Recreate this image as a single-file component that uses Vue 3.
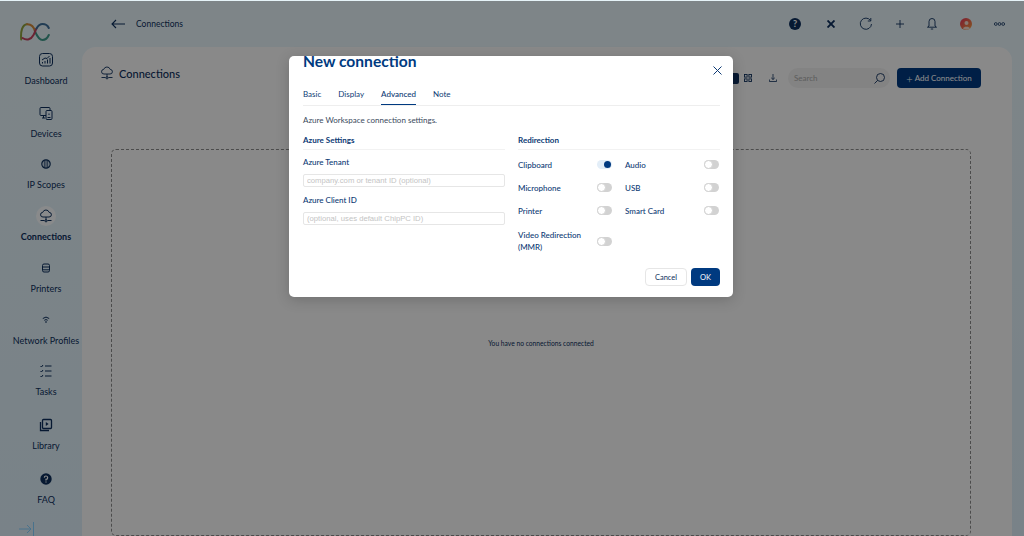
<template>
  <div class="app">
    <aside class="sidebar">
      <div class="logo">
        <svg width="30" height="19" viewBox="0 0 30 19" fill="none" stroke-width="2" stroke-linecap="round">
          <path d="M1.200 16.500C.5 9 2 1.500 7 1.200" stroke="#8fa03c" />
          <path d="M7 1.200C11 1 14 4 15 8.500" stroke="#d0883a" />
          <path d="M15 8.500C17 13 19 17 22.500 17C25 17 27.500 15 28.800 12" stroke="#3f9a8a" />
          <path d="M2.500 15C7 18 11 16.500 13.500 12C15 9.500 15.500 7 16.500 5.500" stroke="#c2405e" />
          <path d="M16.500 5.500C18.500 2 20.500 1 22.500 1C25 1 27.500 2 28.800 5" stroke="#3f6f9a" />
        </svg>
      </div>
      <nav class="nav">
        <div
          v-for="item in navItems"
          :key="item.label"
          class="nav-item"
          :class="{ active: item.active }"
          :style="{ height: item.h + 'px' }"
        >
          <div class="nav-icon">
            <svg width="18" height="18" viewBox="0 0 18 18" fill="none" stroke="#0d2f5c" stroke-width="1" v-html="item.icon"></svg>
          </div>
          <span>{{ item.label }}</span>
        </div>
      </nav>
      <svg class="collapse" width="16" height="14" viewBox="0 0 16 14" fill="none" stroke="#86d0ff" stroke-width="1">
        <path d="M0 7h12M8 3l4 4-4 4M14.500 0v14" />
      </svg>
    </aside>

    <div class="main">
      <header class="topbar">
        <div class="crumb">
          <svg width="14" height="10" viewBox="0 0 14 10" fill="none" stroke="#0d2f5c" stroke-width="1.100">
            <path d="M14 5H1M5 1L1 5l4 4" />
          </svg>
          <span>Connections</span>
        </div>
        <div class="top-actions">
          <span class="help">?</span>
          <svg class="a-x" width="8" height="8" viewBox="0 0 8 8" fill="none" stroke="#0d2f5c" stroke-width="1.900">
            <path d="M.5.5l7 7M7.500.5l-7 7" />
          </svg>
          <svg class="a-refresh" width="13" height="13" viewBox="0 0 13 13" fill="none" stroke="#0d2f5c" stroke-width=".9">
            <path d="M11.500 3.500A5.600 5.600 0 1 0 12.500 7" />
            <path d="M8.800 4h3V1" />
          </svg>
          <svg class="a-plus" width="8" height="8" viewBox="0 0 8 8" fill="none" stroke="#0d2f5c" stroke-width=".9">
            <path d="M4 0v8M0 4h8" />
          </svg>
          <svg class="a-bell" width="10" height="13" viewBox="0 0 10 13" fill="none" stroke="#0d2f5c" stroke-width=".9">
            <path d="M2 9V4.500a3 3 0 0 1 6 0V9l1.500 1.200H.5zM3.800 12h2.400" />
          </svg>
          <svg class="a-avatar" width="12" height="12" viewBox="0 0 12 12">
            <defs>
              <linearGradient id="ava" x1="0" y1="0" x2="1" y2="1">
                <stop offset="0" stop-color="#e8305a" />
                <stop offset="1" stop-color="#f2a03c" />
              </linearGradient>
            </defs>
            <circle cx="6" cy="6" r="6" fill="url(#ava)" />
            <circle cx="6.500" cy="5" r="2" fill="#f4dcd0" />
            <path d="M3 10.500C3.500 8 9.500 8 10 10.500A6 6 0 0 1 3 10.500z" fill="#f4dcd0" />
          </svg>
          <svg width="11" height="4" viewBox="0 0 11 4" fill="none" stroke="#0d2f5c" stroke-width=".8">
            <circle cx="1.800" cy="2" r="1.400" />
            <circle cx="5.500" cy="2" r="1.400" />
            <circle cx="9.200" cy="2" r="1.400" />
          </svg>
        </div>
      </header>

      <section class="panel">
        <div class="panel-head">
          <div class="panel-title">
            <svg width="12" height="14" viewBox="0 0 12 14" fill="none" stroke="#0d2f5c" stroke-width=".9">
              <path d="M3 8a2.300 2.300 0 0 1-.3-4.600A3.400 3.400 0 0 1 9.200 3.400 2.300 2.300 0 0 1 9 8zM6 8v3.500M.5 11.500h4M7.500 11.500h4" />
              <circle cx="6" cy="11.800" r="1.100" />
            </svg>
            <span>Connections</span>
          </div>
          <div class="panel-tools">
            <span class="view-btn"></span>
            <svg class="grid-icon" width="8" height="8" viewBox="0 0 8 8" fill="none" stroke="#0d2f5c" stroke-width=".9">
              <rect x=".5" y=".5" width="2.600" height="2.600" />
              <rect x="4.900" y=".5" width="2.600" height="2.600" />
              <rect x=".5" y="4.900" width="2.600" height="2.600" />
              <rect x="4.900" y="4.900" width="2.600" height="2.600" />
            </svg>
            <svg class="download" width="8" height="8" viewBox="0 0 8 8" fill="none" stroke="#0d2f5c" stroke-width=".8">
              <path d="M4 0v5.500M2.200 3.800L4 5.500l1.800-1.700M.4 5.500v2h7.200v-2" />
            </svg>
            <div class="search">
              <span>Search</span>
              <svg width="11" height="11" viewBox="0 0 11 11" fill="none" stroke="#0d2f5c" stroke-width=".9">
                <circle cx="6.500" cy="4.500" r="4" />
                <path d="M3.600 7.400L.5 10.500" />
              </svg>
            </div>
            <button class="add-btn"><span class="plus">+</span><span>Add Connection</span></button>
          </div>
        </div>
        <div class="dropzone">
          <span>You have no connections connected</span>
        </div>
      </section>
    </div>

    <div class="overlay"></div>

    <div class="modal">
      <h2 class="modal-title">New connection</h2>
      <svg class="close" width="9" height="9" viewBox="0 0 9 9" fill="none" stroke="#0d3a74" stroke-width="1">
        <path d="M.5.5l8 8M8.500.5l-8 8" />
      </svg>
      <div class="tabs">
        <span v-for="tab in tabs" :key="tab" class="tab" :class="{ current: tab === 'Advanced' }">{{ tab }}</span>
      </div>
      <p class="desc">Azure Workspace connection settings.</p>
      <div class="columns">
        <div class="col-left">
          <h3 class="section">Azure Settings</h3>
          <label class="field-label">Azure Tenant</label>
          <input class="field" placeholder="company.com or tenant ID (optional)" />
          <label class="field-label second">Azure Client ID</label>
          <input class="field" placeholder="(optional, uses default ChipPC ID)" />
        </div>
        <div class="col-right">
          <h3 class="section">Redirection</h3>
          <div class="toggles">
            <div v-for="t in toggles" :key="t.label" class="toggle-row" :class="t.cls">
              <span class="toggle-label">{{ t.label }}</span>
              <span class="switch" :class="{ on: t.on }"><i></i></span>
            </div>
          </div>
        </div>
      </div>
      <div class="modal-foot">
        <button class="btn-cancel">Cancel</button>
        <button class="btn-ok">OK</button>
      </div>
    </div>
  </div>
</template>

<script setup>
const navItems = [
  { label: 'Dashboard', h: 53, icon: '<rect x="2.500" y="2.500" width="13" height="12.500" rx="3"/><path d="M5.500 12.500v-1.500M8 12.500V10M10.500 12.500V8.500M13 12.500V7M5 9l3-2 2 .5 2.500-2.500"/>' },
  { label: 'Devices', h: 51, icon: '<rect x="3" y="3.500" width="10" height="8" rx="1"/><rect x="9" y="6.500" width="6" height="9" rx="1" fill="#e8f4fc"/><path d="M5 14h3M6.500 11.500V14M10.500 13.500h3M12 9.500v1.500"/>' },
  { label: 'IP Scopes', h: 52, icon: '<circle cx="9" cy="9" r="4.200" stroke-width="1.200"/><path d="M7.300 5.300v7.400M9 4.800v8.400M10.700 5.300v7.400" stroke-width=".8"/>' },
  { label: 'Connections', h: 52, active: true, icon: '<path d="M6 10a2.300 2.300 0 0 1-.3-4.600A3.400 3.400 0 0 1 12.200 5.400 2.300 2.300 0 0 1 12 10zM9 10v3.500M3.500 13.500h4M10.500 13.500h4"/><circle cx="9" cy="13.800" r="1.100"/>' },
  { label: 'Printers', h: 52, icon: '<rect x="5.500" y="5" width="7" height="8" rx="1.500"/><path d="M5.500 8h7M5.500 10.800h7"/>' },
  { label: 'Network Profiles', h: 51, icon: '<path d="M5.800 7.500a4.800 4.800 0 0 1 6.400 0M7.300 9.300a2.600 2.600 0 0 1 3.400 0"/><circle cx="9" cy="11" r=".4"/>' },
  { label: 'Tasks', h: 54, icon: '<path d="M8 4h6.500M8 9h6.500M8 14h6.500M3.500 4l1 1L6 3M3.500 9l1 1L6 8M3.500 14l1 1L6 13"/>' },
  { label: 'Library', h: 54, icon: '<rect x="5.500" y="3.500" width="9" height="9" rx="1" stroke-width="1.300"/><path d="M3.500 6v8.500H12" stroke-width="1.300"/><path d="M8.800 6l2.800 2-2.800 2z" fill="#0d2f5c" stroke="none"/>' },
  { label: 'FAQ', h: 54, icon: '<circle cx="9" cy="9" r="5.700" fill="#0d2f5c" stroke="none"/><path d="M7.300 7.600A1.700 1.700 0 1 1 9 9.400v1M9 11.400v1.100" stroke="#fff" stroke-width="1.200"/>' }
]

const tabs = ['Basic', 'Display', 'Advanced', 'Note']

const toggles = [
  { label: 'Clipboard', on: true },
  { label: 'Audio' },
  { label: 'Microphone' },
  { label: 'USB' },
  { label: 'Printer' },
  { label: 'Smart Card' },
  { label: 'Video Redirection (MMR)', cls: 'wide' }
]
</script>

<style>
html,
body {
  margin: 0;
  overflow: hidden;
}
</style>

<style scoped>
.app {
  position: relative;
  display: flex;
  width: 1024px;
  height: 536px;
  overflow: hidden;
  background: linear-gradient(180deg, #e6f3f8, #dcedf8);
  font-family: Lato, "Liberation Sans", sans-serif;
  color: #0d2f5c;
}

.sidebar {
  position: relative;
  width: 82px;
  flex-shrink: 0;
}

.logo {
  height: 50px;
  box-sizing: border-box;
  padding: 23px 0 0 20px;
}

.logo svg {
  display: block;
}

.nav {
  display: flex;
  flex-direction: column;
  padding-left: 10px;
}

.nav-item {
  display: flex;
  flex-direction: column;
  align-items: center;
  font-size: 9px;
  line-height: 11px;
  white-space: nowrap;
}

.nav-item.active {
  font-weight: 700;
}

.nav-icon {
  width: 20px;
  height: 20px;
  margin-bottom: 5px;
  display: flex;
  align-items: center;
  justify-content: center;
  border-radius: 50%;
}

.nav-item.active .nav-icon {
  background: #f9fcfe;
}

.collapse {
  position: absolute;
  left: 19px;
  bottom: 0;
}

.main {
  width: 930px;
  flex-shrink: 0;
  display: flex;
  flex-direction: column;
}

.topbar {
  width: 942px;
  box-sizing: border-box;
  height: 47px;
  flex-shrink: 0;
  display: flex;
  align-items: center;
  justify-content: space-between;
  padding: 0 19px 0 29px;
}

.crumb {
  display: flex;
  align-items: center;
  gap: 11px;
  font-size: 8.500px;
}

.top-actions {
  display: flex;
  align-items: center;
  gap: 22px;
}

.a-x {
  margin-left: 4px;
}

.a-refresh {
  margin-left: 2px;
}

.a-plus {
  margin-left: 2px;
}

.a-bell,
.a-avatar {
  margin-left: 1px;
}

.help {
  width: 12px;
  height: 12px;
  border-radius: 50%;
  background: #0d2f5c;
  color: #fff;
  font-size: 9px;
  font-weight: 700;
  line-height: 12px;
  text-align: center;
}

.panel {
  flex: 1;
  background: #fafafa;
  border-radius: 14px 14px 0 0;
  padding: 0 42px 0 29px;
  display: flex;
  flex-direction: column;
  min-height: 0;
}

.panel-head {
  height: 102px;
  flex-shrink: 0;
  box-sizing: border-box;
  display: flex;
  align-items: flex-start;
  justify-content: space-between;
  margin: 0 -11px 0 -10px;
  padding-top: 21px;
}

.panel-title {
  display: flex;
  align-items: center;
  gap: 6px;
  height: 12px;
  margin-top: -1px;
  font-size: 11px;
  font-weight: 500;
}

.panel-tools {
  display: flex;
  align-items: center;
  height: 20px;
}

.view-btn {
  width: 9px;
  height: 11px;
  background: #0d2f5c;
  border-radius: 2px;
}

.grid-icon {
  margin-left: 5px;
}

.download {
  margin-left: 17px;
}

.search {
  width: 102px;
  height: 20px;
  margin-left: 11px;
  border-radius: 10px;
  background: #eeeeee;
  display: flex;
  align-items: center;
  justify-content: space-between;
  padding: 0 5px 0 6px;
  box-sizing: border-box;
  font-size: 8px;
  color: #aaa;
}

.add-btn {
  width: 84px;
  height: 20px;
  margin-left: 7px;
  border: none;
  border-radius: 4px;
  background: #003a80;
  color: #fff;
  font-family: inherit;
  font-size: 8px;
  padding: 0;
  display: flex;
  align-items: center;
  justify-content: center;
  gap: 2px;
}

.plus {
  font-size: 11px;
  font-weight: 300;
  line-height: 11px;
}

.dropzone {
  height: 387px;
  width: 860px;
  box-sizing: border-box;
  border: 1px dashed #8a8a8a;
  border-radius: 5px;
  display: flex;
  align-items: center;
  justify-content: center;
  font-size: 6.700px;
  flex-shrink: 0;
}

.overlay {
  position: absolute;
  inset: 1px 0 0;
  background: rgba(0, 0, 0, 0.45);
}

.modal {
  position: absolute;
  left: 289px;
  top: 56px;
  width: 444px;
  height: 241px;
  box-sizing: border-box;
  background: #fff;
  border-radius: 5px;
  padding: 0 13px 11px 14px;
  box-shadow: 0 3px 14px rgba(0, 0, 0, 0.18);
  display: flex;
  flex-direction: column;
  color: #0d3a74;
}

.modal-title {
  margin: -2px 0 0;
  font-size: 15.600px;
  font-weight: 700;
  line-height: 15px;
  height: 13px;
  color: #003a80;
}

.close {
  position: absolute;
  top: 10px;
  right: 11px;
}

.tabs {
  display: flex;
  gap: 17px;
  margin-top: 18px;
  height: 20px;
  border-bottom: 1px solid #eeeeee;
  font-size: 8px;
}

.tab {
  height: 20px;
  line-height: 19px;
  box-sizing: border-box;
}

.tab.current {
  border-bottom: 1px solid #003a80;
  font-weight: 500;
}

.desc {
  margin: 9px 0 0;
  font-size: 8px;
  line-height: 10px;
  color: #3a4a5c;
}

.columns {
  display: flex;
  margin-top: 9px;
  gap: 13px;
}

.col-left {
  width: 202px;
  display: flex;
  flex-direction: column;
}

.col-right {
  flex: 1;
}

.section {
  margin: 0;
  height: 15px;
  font-size: 8px;
  line-height: 12px;
  font-weight: 700;
  border-bottom: 1px solid #f2f2f2;
}

.field-label {
  margin-top: 7px;
  font-size: 8px;
  line-height: 10px;
  font-weight: 500;
}

.field-label.second {
  margin-top: 8px;
}

.field {
  height: 13px;
  margin-top: 7px;
  box-sizing: border-box;
  border: 1px solid #e6e6e6;
  border-radius: 2px;
  padding: 0 3px;
  font-size: 7.700px;
  font-family: "Liberation Sans", sans-serif;
  outline: none;
}

.field::placeholder {
  color: #c4c4c4;
}

.toggles {
  display: grid;
  grid-template-columns: 94px 94px;
  column-gap: 13px;
  margin-top: 3px;
}

.toggle-row {
  display: flex;
  align-items: center;
  justify-content: space-between;
  height: 23px;
  font-size: 8px;
  font-weight: 500;
}

.toggle-row.wide {
  height: 38px;
  line-height: 12px;
}

.toggle-label {
  max-width: 70px;
}

.switch {
  position: relative;
  width: 15px;
  height: 9px;
  border-radius: 5px;
  background: #d2d2d2;
}

.switch i {
  position: absolute;
  left: 0;
  top: 0;
  width: 9px;
  height: 9px;
  box-sizing: border-box;
  border: 1px solid #d2d2d2;
  border-radius: 50%;
  background: #fff;
}

.switch.on {
  background: #e3eef8;
}

.switch.on i {
  left: 7px;
  top: 1px;
  width: 7px;
  height: 7px;
  border: none;
  background: #003a80;
}

.modal-foot {
  display: flex;
  justify-content: flex-end;
  gap: 4px;
  margin-top: auto;
}

.btn-cancel,
.btn-ok {
  height: 18px;
  border-radius: 4px;
  font-family: inherit;
  font-size: 7.500px;
  padding: 0;
}

.btn-cancel {
  width: 42px;
  background: #fff;
  border: 1px solid #e6e6e6;
  color: #0d2f5c;
}

.btn-ok {
  width: 29px;
  background: #003a80;
  border: none;
  color: #fff;
}
</style>
